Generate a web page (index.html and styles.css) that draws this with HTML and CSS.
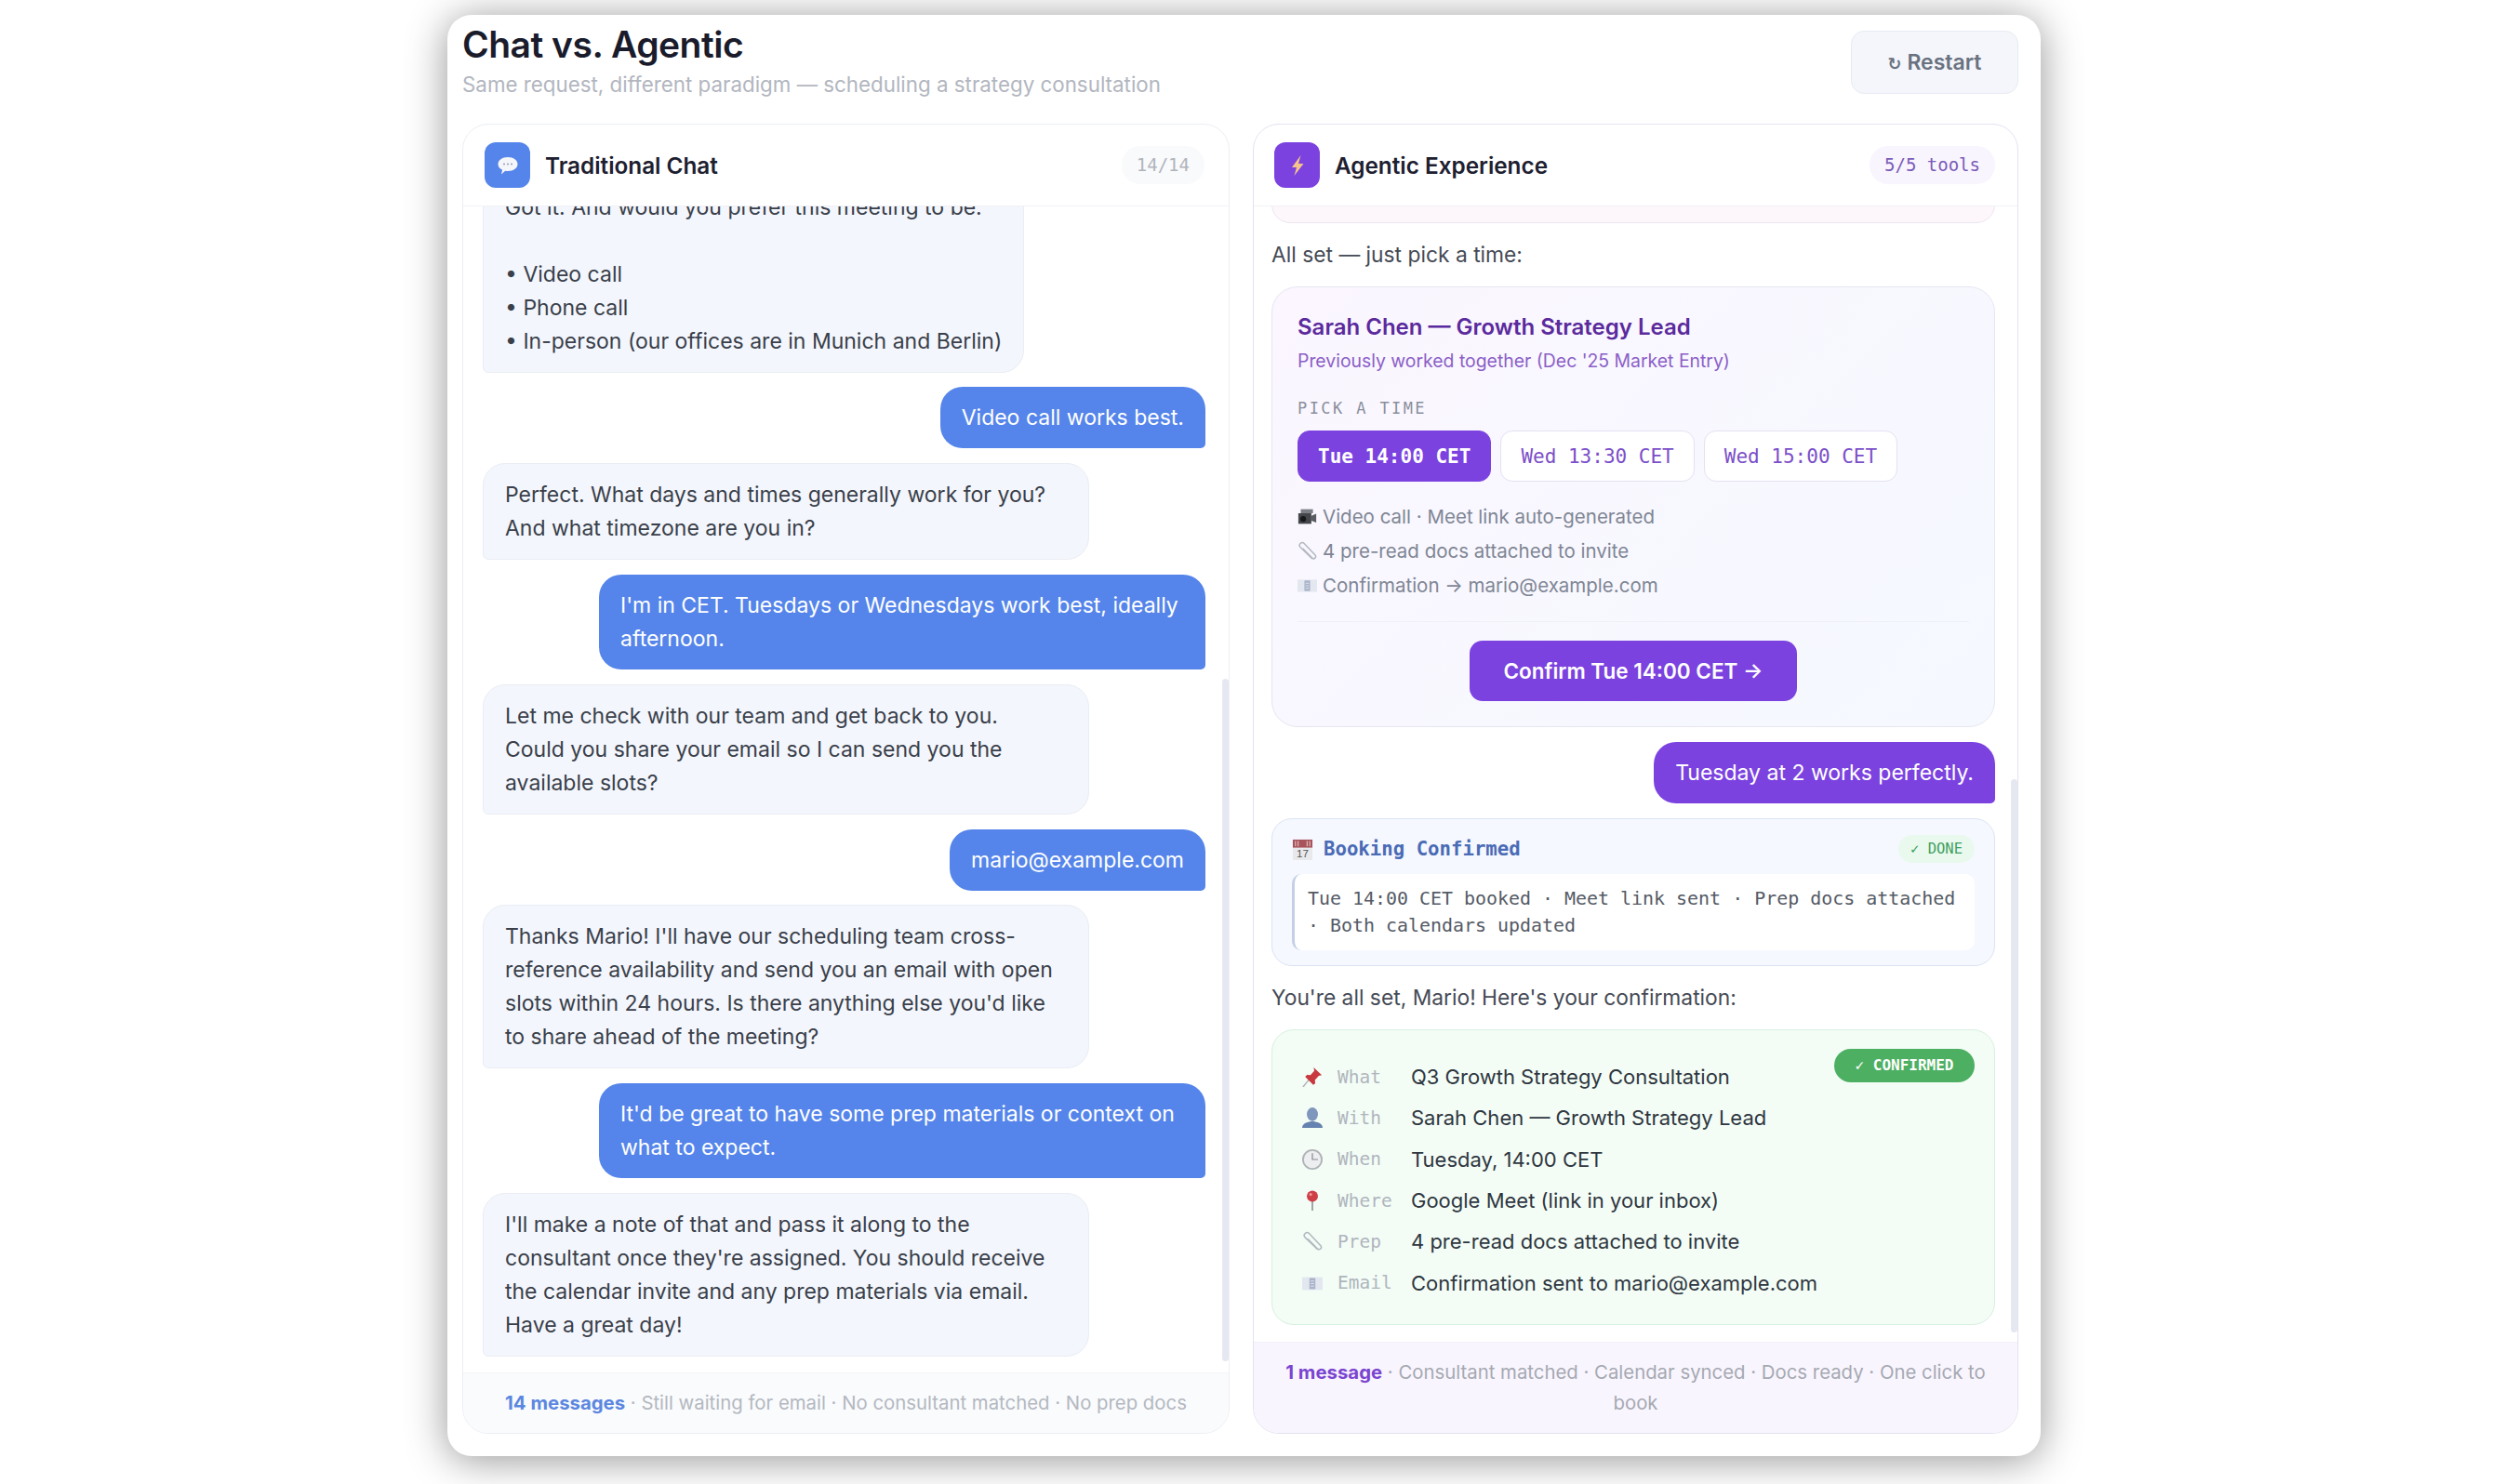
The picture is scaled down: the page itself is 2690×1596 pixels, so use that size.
FILE: index.html
```html
<!DOCTYPE html>
<html lang="en">
<head>
<meta charset="utf-8">
<title>Chat vs. Agentic</title>
<link rel="stylesheet" href="styles.css">
</head>
<body>
<svg class="defs" width="0" height="0" aria-hidden="true">
  <symbol id="i-clip" viewBox="0 0 24 24"><path d="M17.500 21 3.500 7.500a3.300 3.300 0 0 1 4.700-4.700L22 17.500a2.600 2.600 0 0 1-3.700 3.500L7 9.500" fill="none" stroke="#b4b8bf" stroke-width="1.700" stroke-linecap="round"/></symbol>
  <symbol id="i-mail" viewBox="0 0 24 24"><rect x="0" y="5" width="24" height="15" fill="#e3e7ef"/><rect x="8.500" y="6" width="7" height="13" fill="#a9b4cb"/><path d="M10 9.500h4M10 12.500h4M10 15.500h4" stroke="#e3e7ef"/></symbol>
</svg>
<main class="window">
  <header class="top">
    <div>
      <h1 class="title">Chat vs. Agentic</h1>
      <p class="subtitle">Same request, different paradigm — scheduling a strategy consultation</p>
    </div>
    <button class="restart"><span class="restart-glyph">↻</span> Restart</button>
  </header>
  <div class="panels">
    <section class="panel panel-chat">
      <div class="panel-head">
        <span class="app-icon app-blue">
          <svg width="30" height="30" viewBox="0 0 30 30"><path d="M15 6c6.200 0 10.500 3.300 10.500 7.500S21.200 21 15 21c-1 0-1.900-.1-2.800-.2L8 24.500l1.100-4.800C6.200 18.500 4.500 16.200 4.500 13.500 4.500 9.300 8.800 6 15 6Z" fill="#f5f6fa"/><circle cx="11" cy="13.500" r="1.100" fill="#9aa6bd"/><circle cx="15" cy="13.500" r="1.100" fill="#9aa6bd"/><circle cx="19" cy="13.500" r="1.100" fill="#9aa6bd"/></svg>
        </span>
        <h2 class="panel-title">Traditional Chat</h2>
        <span class="count count-grey">14/14</span>
      </div>
      <div class="messages messages-chat">
        <div class="msg agent">Got it. And would you prefer this meeting to be:<br><br>• Video call<br>• Phone call<br>• In-person (our offices are in Munich and Berlin)</div>
        <div class="msg user">Video call works best.</div>
        <div class="msg agent wide">Perfect. What days and times generally work for you?<br>And what timezone are you in?</div>
        <div class="msg user wide">I'm in CET. Tuesdays or Wednesdays work best, ideally<br>afternoon.</div>
        <div class="msg agent wide">Let me check with our team and get back to you.<br>Could you share your email so I can send you the<br>available slots?</div>
        <div class="msg user">mario@example.com</div>
        <div class="msg agent wide">Thanks Mario! I'll have our scheduling team cross-<br>reference availability and send you an email with open<br>slots within 24 hours. Is there anything else you'd like<br>to share ahead of the meeting?</div>
        <div class="msg user wide">It'd be great to have some prep materials or context on<br>what to expect.</div>
        <div class="msg agent wide">I'll make a note of that and pass it along to the<br>consultant once they're assigned. You should receive<br>the calendar invite and any prep materials via email.<br>Have a great day!</div>
        <span class="scrollbar scrollbar-chat"></span>
      </div>
      <footer class="panel-foot foot-chat"><b class="foot-blue">14 messages</b> · Still waiting for email · No consultant matched · No prep docs</footer>
    </section>

    <section class="panel panel-agent">
      <div class="panel-head">
        <span class="app-icon app-purple">
          <svg width="26" height="30" viewBox="0 0 26 30"><path d="M16.500 4 7 17h5l-2.500 9L19.500 13h-5.500L16.500 4Z" fill="#f5c48a"/></svg>
        </span>
        <h2 class="panel-title">Agentic Experience</h2>
        <span class="count count-purple">5/5 tools</span>
      </div>
      <div class="messages messages-agent">
        <div class="clipped-card"></div>
        <p class="plain">All set — just pick a time:</p>
        <div class="pick-card">
          <h3 class="pick-name">Sarah Chen — Growth Strategy Lead</h3>
          <p class="pick-sub">Previously worked together (Dec '25 Market Entry)</p>
          <p class="pick-label">PICK A TIME</p>
          <div class="slots">
            <button class="slot slot-on">Tue 14:00 CET</button>
            <button class="slot">Wed 13:30 CET</button>
            <button class="slot">Wed 15:00 CET</button>
          </div>
          <ul class="facts">
            <li class="fact"><svg class="fact-icon" viewBox="0 0 24 24"><path d="M1 8h16v13H1z" fill="#44464b"/><circle cx="7" cy="15" r="3.500" fill="#17181a"/><path d="M17 11l6-2.500v11L17 17z" fill="#5a5c62"/><path d="M4 3h15v5H4z" fill="#7c7e85"/></svg>Video call · Meet link auto-generated</li>
            <li class="fact"><svg class="fact-icon"><use href="#i-clip"/></svg>4 pre-read docs attached to invite</li>
            <li class="fact"><svg class="fact-icon"><use href="#i-mail"/></svg>Confirmation → mario@example.com</li>
          </ul>
          <div class="pick-action"><button class="confirm">Confirm Tue 14:00 CET →</button></div>
        </div>
        <div class="msg user user-purple">Tuesday at 2 works perfectly.</div>
        <div class="tool-card">
          <div class="tool-head">
            <svg class="tool-icon" viewBox="0 0 24 24"><rect x="1" y="1" width="22" height="23" fill="#e9e9ec"/><rect x="1" y="1" width="22" height="9" fill="#a8545a"/><path d="M4 2.500v6M7 2.500v6M17 2.500v6M20 2.500v6" stroke="#e9d5d6"/><text x="12" y="21" text-anchor="middle" class="tool-icon-text">17</text></svg>
            <span class="tool-name">Booking Confirmed</span>
            <span class="done">✓ DONE</span>
          </div>
          <div class="tool-result">Tue 14:00 CET booked · Meet link sent · Prep docs attached · Both calendars updated</div>
        </div>
        <p class="plain">You're all set, Mario! Here's your confirmation:</p>
        <div class="summary">
          <span class="confirmed">✓ CONFIRMED</span>
          <div class="row"><svg class="row-icon" viewBox="0 0 24 24"><path d="M1 24 9.500 13.500" stroke="#b0b3b8" stroke-width="1.600"/><path d="M13.500 1l9.500 9-3.500.8-4.500 5 .3 4-2.300 1.700-9.500-9.500 2.200-2.200 4 .2 4.500-4.800z" fill="#c8383e"/></svg><span class="row-label">What</span><span class="row-value">Q3 Growth Strategy Consultation</span></div>
          <div class="row"><svg class="row-icon" viewBox="0 0 24 24"><ellipse cx="12" cy="8" rx="6.500" ry="8" fill="#7f96bd"/><path d="M0 24c0-5 5-7 12-8 7 1 12 3 12 8z" fill="#6582b0"/></svg><span class="row-label">With</span><span class="row-value">Sarah Chen — Growth Strategy Lead</span></div>
          <div class="row"><svg class="row-icon" viewBox="0 0 24 24"><circle cx="12" cy="12" r="11" fill="#eceef0" stroke="#b0b2b6" stroke-width="2"/><path d="M12 4.500V12h6.500" fill="none" stroke="#85888e" stroke-width="1.300"/></svg><span class="row-label">When</span><span class="row-value">Tuesday, 14:00 CET</span></div>
          <div class="row"><svg class="row-icon" viewBox="0 0 24 24"><path d="M12 11v13" stroke="#9a9da3" stroke-width="2"/><circle cx="12" cy="7" r="6.500" fill="#cf3f46"/><circle cx="10" cy="5" r="1.700" fill="#ee9ca0"/></svg><span class="row-label">Where</span><span class="row-value">Google Meet (link in your inbox)</span></div>
          <div class="row"><svg class="row-icon"><use href="#i-clip"/></svg><span class="row-label">Prep</span><span class="row-value">4 pre-read docs attached to invite</span></div>
          <div class="row"><svg class="row-icon"><use href="#i-mail"/></svg><span class="row-label">Email</span><span class="row-value">Confirmation sent to mario@example.com</span></div>
        </div>
        <span class="scrollbar scrollbar-agent"></span>
      </div>
      <footer class="panel-foot foot-agent"><b class="foot-purple">1 message</b> · Consultant matched · Calendar synced · Docs ready · One click to book</footer>
    </section>
  </div>
</main>
</body>
</html>
```

FILE: styles.css
```css
* { box-sizing: border-box; }
html, body { margin: 0; padding: 0; }
body {
  background: #fff;
  font-family: Inter, "Liberation Sans", sans-serif;
  color: #3a3f4a;
  height: 1596px;
  overflow: hidden;
}
h1, h2, h3, p, ul { margin: 0; padding: 0; }
button { font-family: inherit; cursor: pointer; }
.defs { position: absolute; }

.window {
  margin: 16px 0 0 481px;
  width: 1713px;
  height: 1550px;
  padding: 9px 24px 24px 16px;
  background: #fff;
  border-radius: 26px;
  box-shadow: 0 4px 44px rgba(0, 0, 0, .42);
  display: flex;
  flex-direction: column;
}

.top {
  height: 108px;
  flex: none;
  display: flex;
  justify-content: space-between;
  align-items: flex-start;
}
.title {
  font-size: 39px;
  line-height: 46px;
  font-weight: 600;
  letter-spacing: -.5px;
  color: #1a1c2c;
}
.subtitle {
  margin-top: 3px;
  font-size: 22.350px;
  line-height: 34px;
  color: #b2b6bf;
}
.restart {
  margin-top: 8px;
  width: 180px;
  height: 68px;
  background: #f4f6fb;
  border: 1px solid #e8ebf3;
  border-radius: 14px;
  font-size: 23px;
  font-weight: 600;
  color: #6a7280;
}
.restart-glyph { font-family: "DejaVu Sans", sans-serif; font-size: 18px; }

.panels {
  flex: 1;
  min-height: 0;
  display: grid;
  grid-template-columns: 825px 823px;
  column-gap: 25px;
}
.panel {
  display: flex;
  flex-direction: column;
  min-height: 0;
  background: #fff;
  border: 1.500px solid #eceef3;
  border-radius: 28px;
  overflow: hidden;
}
.panel-agent { border-color: #e4e2f1; }
.panel-head {
  height: 88px;
  flex: none;
  display: flex;
  align-items: center;
  gap: 16px;
  padding: 0 26px 0 23px;
  border-bottom: 1px solid #f1f2f6;
}
.panel-agent .panel-head { padding-left: 22px; padding-right: 24px; }
.app-icon {
  width: 49px;
  height: 49px;
  border-radius: 12px;
  display: flex;
  align-items: center;
  justify-content: center;
}
.app-blue { background: #5585ea; }
.app-purple { background: #7b42e0; }
.panel-title {
  flex: 1;
  font-size: 24.300px;
  font-weight: 600;
  color: #1d2030;
}
.count {
  height: 41px;
  padding: 0 16px;
  border-radius: 20px;
  font-family: "DejaVu Sans Mono", monospace;
  font-size: 19px;
  line-height: 41px;
}
.count-grey { background: #f9fafb; color: #b0b4bb; }
.count-purple { background: #f9f5fe; color: #7a5cb8; }

.messages {
  position: relative;
  flex: 1;
  min-height: 0;
  display: flex;
  flex-direction: column;
  justify-content: flex-end;
  gap: 16px;
  overflow: hidden;
  padding-bottom: 18px;
}
.messages-chat { padding-left: 21px; padding-right: 25px; padding-bottom: 17px; gap: 15.800px; }
.messages-agent { padding-left: 19px; padding-right: 24px; }
.msg {
  flex: none;
  width: fit-content;
  font-size: 23px;
  line-height: 36px;
}
.agent {
  align-self: flex-start;
  padding: 15px 23px;
  background: #f3f6fc;
  border: 1px solid #eaedf3;
  border-radius: 24px 24px 24px 6px;
  color: #3a3f4a;
}
.user {
  align-self: flex-end;
  padding: 15px 23px;
  background: #5585ea;
  border-radius: 24px 24px 5px 24px;
  color: #fff;
}
.wide { width: 652px; }
.user-purple { background: #7b42e0; }
.scrollbar {
  position: absolute;
  right: 0;
  width: 7px;
  background: #e6e8f1;
  border-radius: 4px;
}
.scrollbar-chat { top: 508px; height: 734px; }
.scrollbar-agent { top: 616px; height: 595px; }

.panel-foot {
  flex: none;
  text-align: center;
  color: #a5a9b2;
  font-size: 20.350px;
}
.panel-foot b { font-weight: 700; }
.foot-chat {
  height: 65px;
  line-height: 64px;
  background: #fafbfd;
  border-top: 1px solid #f3f4f8;
  color: #b3b8c0;
}
.foot-agent {
  height: 98px;
  padding: 15px 24px 0;
  line-height: 33px;
  background: #f9f5fe;
  border-top: 1px solid #f3f0f9;
}
.foot-blue { color: #5b87e0; }
.foot-purple { color: #7a45d0; }

.clipped-card {
  flex: none;
  height: 60px;
  background: #fdf6fb;
  border: 1.500px solid #ece5f1;
  border-radius: 20px;
}
.plain {
  flex: none;
  font-size: 22.800px;
  line-height: 36px;
  color: #454a55;
}

.pick-card {
  flex: none;
  height: 474px;
  padding: 26px 27px;
  background: linear-gradient(135deg, #fbf6ff, #f5f9ff);
  border: 1.500px solid #e5e6f2;
  border-radius: 28px;
}
.pick-name {
  font-size: 24px;
  line-height: 34px;
  font-weight: 600;
  color: #5b2a9d;
}
.pick-sub {
  margin-top: 4px;
  font-size: 19.400px;
  line-height: 30px;
  color: #8b5fc7;
}
.pick-label {
  margin-top: 24px;
  font-family: "DejaVu Sans Mono", monospace;
  font-size: 17px;
  line-height: 24px;
  letter-spacing: 2.400px;
  color: #8a8f9c;
}
.slots { margin-top: 12px; display: flex; gap: 10px; }
.slot {
  height: 55px;
  padding: 0 21px;
  background: #fff;
  border: 1.500px solid #e4e1f2;
  border-radius: 13px;
  font-family: "DejaVu Sans Mono", monospace;
  font-size: 21px;
  color: #7b4fc9;
}
.slot-on {
  background: #7b42e0;
  border-color: #7b42e0;
  color: #fff;
  font-weight: 700;
}
.facts { margin-top: 19px; list-style: none; }
.fact {
  display: flex;
  align-items: center;
  gap: 6px;
  font-size: 20.500px;
  line-height: 37px;
  color: #7f8694;
}
.fact-icon { width: 21px; height: 21px; flex: none; }
.pick-action {
  margin-top: 20px;
  padding-top: 20px;
  border-top: 1px solid #eef0f6;
  display: flex;
  justify-content: center;
}
.confirm {
  width: 352px;
  height: 65px;
  background: #7b42e0;
  border: 0;
  border-radius: 14px;
  font-size: 22.500px;
  font-weight: 600;
  color: #fff;
}

.tool-card {
  flex: none;
  height: 159px;
  padding: 17px 21px 0;
  background: #f5f8ff;
  border: 1.500px solid #dbe3f3;
  border-radius: 22px;
}
.tool-head { display: flex; align-items: center; height: 30px; }
.tool-icon { width: 23px; height: 23px; margin-right: 11px; flex: none; }
.tool-icon-text { font: 12px "Liberation Sans", sans-serif; fill: #555; }
.tool-name {
  flex: 1;
  font-family: "DejaVu Sans Mono", monospace;
  font-size: 20.700px;
  font-weight: 700;
  color: #4a6bb5;
}
.done {
  width: 82px;
  height: 30px;
  text-align: center;
  background: #e9f9ee;
  border-radius: 15px;
  font-family: "DejaVu Sans Mono", monospace;
  font-size: 15.500px;
  line-height: 30px;
  color: #3f9f60;
}
.tool-result {
  margin-top: 12px;
  height: 82px;
  padding: 12px 14px;
  background: #fff;
  border-left: 3px solid #c5d0e6;
  border-radius: 10px;
  font-family: "DejaVu Sans Mono", monospace;
  font-size: 19.950px;
  line-height: 29px;
  color: #555b66;
}

.summary {
  position: relative;
  flex: none;
  height: 318px;
  padding: 28px 32px 0;
  background: #f3fdf6;
  border: 1.500px solid #d7f0df;
  border-radius: 24px;
}
.confirmed {
  position: absolute;
  top: 20px;
  right: 21px;
  width: 151px;
  height: 36px;
  text-align: center;
  background: #4caf61;
  border-radius: 18px;
  font-family: "DejaVu Sans Mono", monospace;
  font-size: 16px;
  font-weight: 700;
  line-height: 36px;
  color: #fff;
}
.row {
  display: grid;
  grid-template-columns: 38px 79px 1fr;
  align-items: center;
  height: 44.300px;
}
.row-icon { width: 22px; height: 22px; }
.row-label {
  font-family: "DejaVu Sans Mono", monospace;
  font-size: 19.500px;
  color: #b0b5bd;
}
.row-value { font-size: 22px; color: #2f3640; }
```
